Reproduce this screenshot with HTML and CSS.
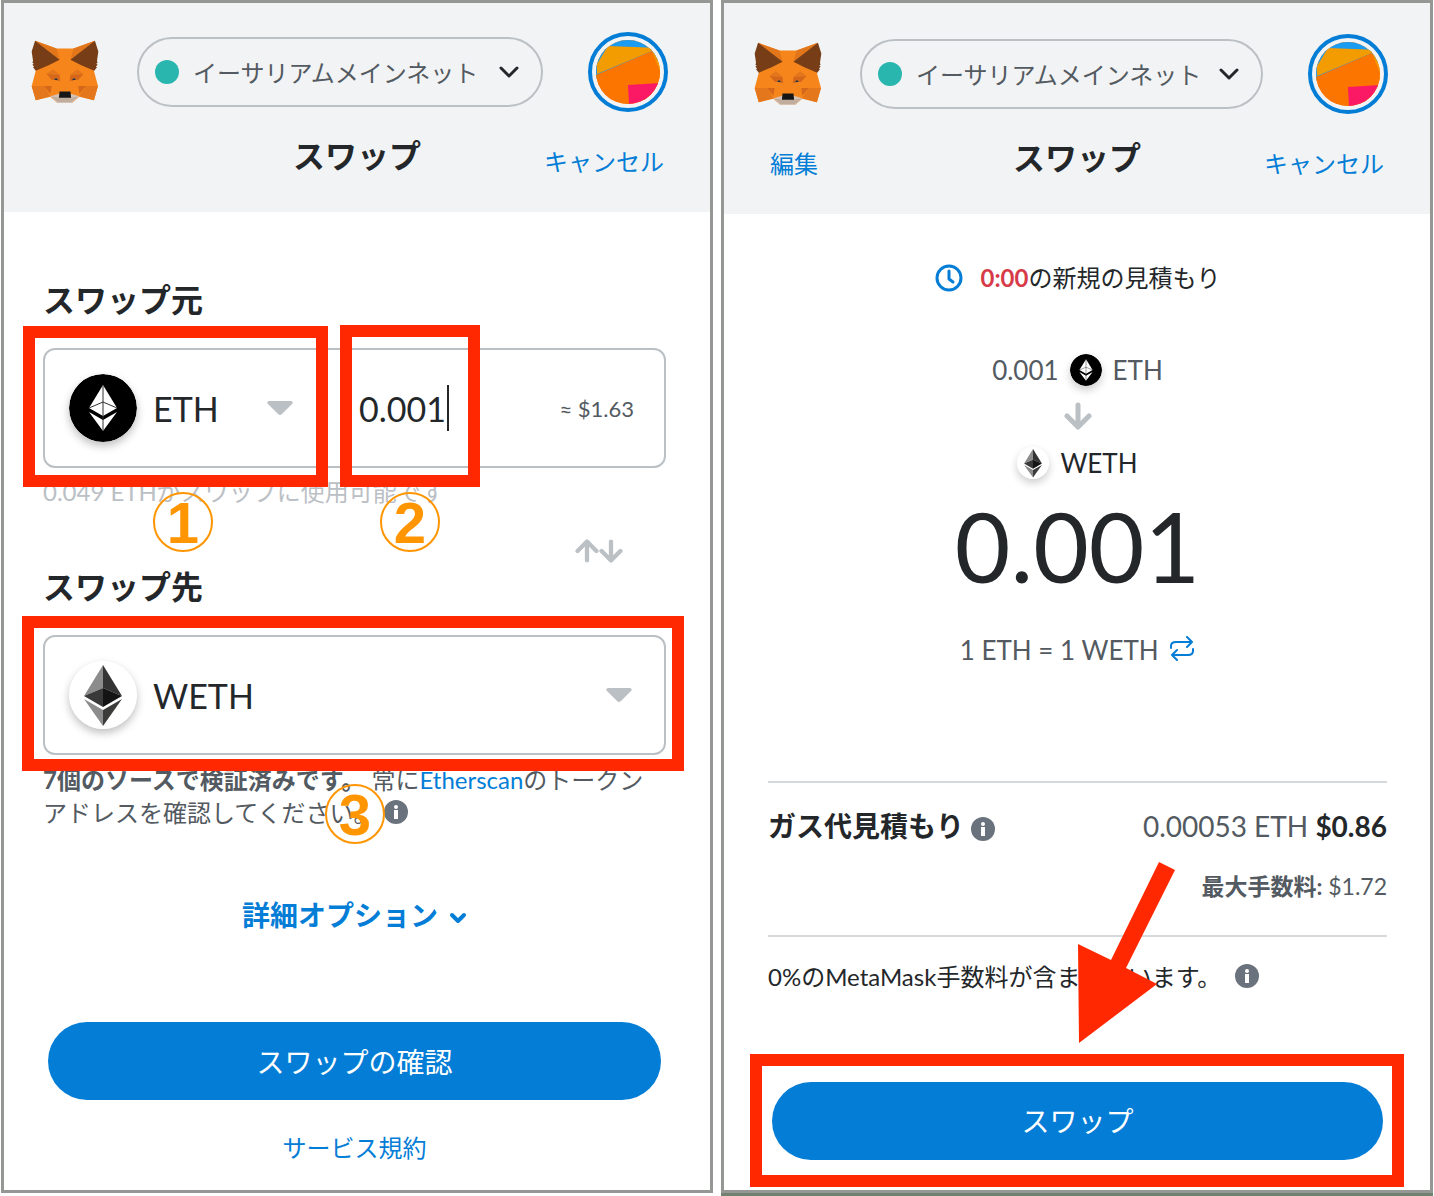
FILE: index.html
```html
<!DOCTYPE html>
<html lang="ja">
<head>
    <meta charset="UTF-8">
    <meta name="viewport" content="width=device-width, initial-scale=1.0">
    <title>MetaMask スワップ</title>
    <link rel="stylesheet" href="styles.css">
</head>
<body>
    <!-- Shared drawings -->
    <svg class="defs" aria-hidden="true">
        <symbol id="fox" viewBox="20 18 200 188">
            <path fill="#f6851b" d="M32 20 95 43H145L208 20 205 108 217 153 205 195 162 185 140 203H98L77 185 34 195 22 153 34 108Z"/>
            <path fill="#e2761b" d="M32 20 95 43 104 76ZM208 20 145 43 136 76Z"/>
            <path fill="#763d16" d="M32 20 104 76 72 92 34 108 26 98 29 96 24 91 28 88 24 84 26 80 22 52ZM208 20 136 76 168 92 206 108 214 98 211 96 216 91 212 88 216 84 214 80 218 52Z"/>
            <path fill="#e4761b" d="M66 118 84 104 104 119ZM174 118 156 104 136 119ZM22 153H58L77 183 34 195ZM217 153H182L162 183 205 195Z"/>
            <path fill="#d5671b" d="M66 118 104 120 106 140 92 130 82 136ZM174 118 136 120 134 140 148 130 158 136ZM58 153H81L77 176ZM182 153H159L162 176Z"/>
            <path fill="#233447" d="M86 134 94 130 101 137ZM154 134 146 130 139 137Z"/>
            <path fill="#d7c1b3" d="M77 183 103 176H137L162 183 140 203H98Z"/>
            <path fill="#c0ad9e" d="M80 184 103 188H137L159 184 140 200H98Z"/>
            <path fill="#161616" d="M104 169H136L138 188H102Z"/>
        </symbol>
        <symbol id="avatar" viewBox="0 0 64 64">
            <clipPath id="avatar-clip"><circle cx="32" cy="32" r="32"/></clipPath>
            <g clip-path="url(#avatar-clip)">
                <path fill="#fc7500" d="M0 0H64V64H0Z"/>
                <path fill="#1a9cf2" d="M0 0H64V20L0 40Z"/>
                <path fill="#f29c02" d="M12 6 64 8V40L56 11 1 34V24Z"/>
                <path fill="#fc7500" d="M0 35 56 11 64 31V64H0Z"/>
                <path fill="#fb1865" d="M32 45 64 43V64H33Z"/>
            </g>
        </symbol>
        <symbol id="chevron" viewBox="0 0 20 12">
            <path fill="none" stroke="currentColor" stroke-width="3" stroke-linecap="round" stroke-linejoin="round" d="M2 2 10 10 18 2"/>
        </symbol>
        <symbol id="chevron-bold" viewBox="0 0 18 12">
            <path fill="none" stroke="currentColor" stroke-width="4" stroke-linecap="round" stroke-linejoin="round" d="M3 3 9 9 15 3"/>
        </symbol>
        <symbol id="caret-down" viewBox="0 0 26 15">
            <path fill="#bbc0c5" d="M2 0H24Q27 1 25 3L15 13Q13 15 11 13L1 3Q-1 1 2 0Z"/>
        </symbol>
        <symbol id="arrow-down" viewBox="0 0 28 28">
            <path fill="none" stroke="#bbc0c5" stroke-width="5" stroke-linecap="round" stroke-linejoin="round" d="M14 3V24M3 14 14 25 25 14"/>
        </symbol>
        <symbol id="eth" viewBox="0 0 68 68">
            <circle cx="34" cy="34" r="34"/>
            <path fill="#fff" d="M34 11 48 34 34 42 20 34Z"/>
            <path fill="#fff" d="M20 38 34 46 48 38 34 57Z"/>
            <path fill="none" stroke="#333" d="M34 11V57M20 34 34 28 48 34"/>
        </symbol>
        <symbol id="weth" viewBox="0 0 68 68">
            <circle cx="34" cy="34" r="34" fill="#fff"/>
            <path fill="#8c8c8c" d="M34 4V27L15 35ZM15 38 34 49V65Z"/>
            <path fill="#343434" d="M34 4V27L53 35Z"/>
            <path fill="#393939" d="M34 27V46L15 35Z"/>
            <path fill="#141414" d="M34 27V46L53 35Z"/>
            <path fill="#3c3c3b" d="M53 38 34 49V65Z"/>
        </symbol>
        <symbol id="info" viewBox="0 0 24 24">
            <circle cx="12" cy="12" r="12" fill="#6a737d"/>
            <path fill="#fff" d="M10 10H14V19H10Z"/>
            <circle cx="12" cy="7" r="2" fill="#fff"/>
        </symbol>
    </svg>

    <main class="page">
        <!-- Enter the swap -->
        <section class="screen">
            <header class="header">
                <div class="header-top">
                    <svg class="fox"><use href="#fox"/></svg>
                    <div class="network">
                        <span class="dot"></span>
                        <select aria-label="ネットワーク">
                            <option>イーサリアムメインネット</option>
                        </select>
                        <svg class="chevron"><use href="#chevron"/></svg>
                    </div>
                    <button class="account" type="button" aria-label="アカウント"><svg><use href="#avatar"/></svg></button>
                </div>
                <div class="header-title">
                    <span></span>
                    <h1>スワップ</h1>
                    <a href="#">キャンセル</a>
                </div>
            </header>

            <form class="swap-form">
                <label class="label" for="from">スワップ元</label>
                <div class="field">
                    <div class="token token-from">
                        <svg class="token-icon"><use href="#eth"/></svg>
                        <select id="from"><option>ETH</option></select>
                        <svg class="caret-down"><use href="#caret-down"/></svg>
                        <span class="mark mark-token"></span>
                        <span class="step step-1">1</span>
                    </div>
                    <div class="amount">
                        <input type="text" value="0.001" aria-label="数量">
                        <span class="cursor"></span>
                        <span class="mark mark-amount"></span>
                        <span class="step step-2">2</span>
                    </div>
                    <span class="fiat">≈ $1.63</span>
                </div>
                <p class="hint">0.049 ETHがスワップに使用可能です</p>

                <button class="switch" type="button" aria-label="入れ替え">
                    <svg class="up"><use href="#arrow-down"/></svg>
                    <svg><use href="#arrow-down"/></svg>
                </button>

                <label class="label" for="to">スワップ先</label>
                <div class="field">
                    <div class="token token-to">
                        <svg class="token-icon"><use href="#weth"/></svg>
                        <select id="to"><option>WETH</option></select>
                        <svg class="caret-down"><use href="#caret-down"/></svg>
                    </div>
                    <span class="mark mark-to"></span>
                    <span class="step step-3">3</span>
                </div>
                <p class="verified"><b>7個のソースで検証済みです。</b> 常に<a href="#">Etherscan</a>のトークンアドレスを確認してください。 <svg class="info"><use href="#info"/></svg></p>

                <button class="options" type="button">詳細オプション <svg><use href="#chevron-bold"/></svg></button>
                <button class="primary" type="button">スワップの確認</button>
                <a class="terms" href="#">サービス規約</a>
            </form>
        </section>

        <!-- Confirm the quote -->
        <section class="screen screen-quote">
            <header class="header">
                <div class="header-top">
                    <svg class="fox"><use href="#fox"/></svg>
                    <div class="network">
                        <span class="dot"></span>
                        <select aria-label="ネットワーク">
                            <option>イーサリアムメインネット</option>
                        </select>
                        <svg class="chevron"><use href="#chevron"/></svg>
                    </div>
                    <button class="account" type="button" aria-label="アカウント"><svg><use href="#avatar"/></svg></button>
                </div>
                <div class="header-title">
                    <a href="#">編集</a>
                    <h1>スワップ</h1>
                    <a href="#">キャンセル</a>
                </div>
            </header>

            <div class="quote">
                <p class="timer">
                    <svg viewBox="0 0 28 28" fill="none" stroke="#037dd6" stroke-linecap="round" stroke-linejoin="round">
                        <circle cx="14" cy="14" r="12" stroke-width="3"/>
                        <path stroke-width="3" d="M14 7V15L18 18"/>
                    </svg>
                    <span><b>0:00</b>の新規の見積もり</span>
                </p>
                <p class="source">0.001 <svg><use href="#eth"/></svg> ETH</p>
                <svg class="arrow"><use href="#arrow-down"/></svg>
                <p class="target"><svg><use href="#weth"/></svg> WETH</p>
                <p class="total">0.001</p>
                <p class="rate">1 ETH = 1 WETH
                    <svg viewBox="0 0 26 26" fill="none" stroke="#037dd6" stroke-width="2" stroke-linecap="round" stroke-linejoin="round">
                        <path d="M2 12V10Q2 6 7 6H23M18 1 23 6 18 11M24 13V15Q24 19 19 19H3M8 14 3 19 8 24"/>
                    </svg>
                </p>

                <div class="fees">
                    <div class="fee-row">
                        <b>ガス代見積もり <svg class="info"><use href="#info"/></svg></b>
                        <span class="gas">0.00053 ETH <b>$0.86</b></span>
                    </div>
                    <p class="max-fee"><b>最大手数料:</b> $1.72</p>
                </div>
                <p class="included">0%のMetaMask手数料が含まれています。 <svg class="info"><use href="#info"/></svg></p>

                <div class="submit">
                    <button class="primary" type="button">スワップ</button>
                    <span class="mark mark-submit"></span>
                    <svg class="pointer" viewBox="0 0 98 182"><path fill="#ff2800" d="M81 0 97 8 48 106 79 122 1 181 0 82 33 98Z"/></svg>
                </div>
            </div>
        </section>
    </main>
</body>
</html>
```

FILE: styles.css
```css
* {
    box-sizing: border-box;
}

body {
    margin: 0;
    background-color: #fff;
    color: #24272a;
    font-family: Lato, "Noto Sans CJK JP", sans-serif;
    font-size: 24px;
}

h1, p {
    margin: 0;
}

a {
    color: #037dd6;
    text-decoration: none;
}

button, select, input {
    border: none;
    padding: 0;
    background: none;
    color: inherit;
    font: inherit;
}

select {
    appearance: none;
}

button {
    cursor: pointer;
}

.defs {
    position: absolute;
    width: 0;
    height: 0;
}

.page {
    display: grid;
    grid-template-columns: 1fr 1fr;
    gap: 8px;
    min-height: 100vh;
    padding: 0 1px 3px;
}

.screen {
    border: 3px solid #959795;
    min-width: 0;
}

.screen-quote {
    box-shadow: 0 3px 0 #71816f;
}

/* Header */
.header {
    height: 209px;
    padding-top: 29px;
    background-color: #f2f3f4;
}

.screen-quote .header {
    height: 211px;
    padding-top: 31px;
}

.header-top {
    display: flex;
    align-items: center;
    padding: 0 42px 0 27px;
}

.screen-quote .header-top {
    padding-left: 30px;
}

.fox {
    width: 68px;
    height: 64px;
}

.network {
    flex: 1;
    display: flex;
    align-items: center;
    min-width: 0;
    height: 70px;
    margin: 0 45px 0 38px;
    padding: 0 22px 0 16px;
    border: 2px solid #bbc0c5;
    border-radius: 35px;
    color: #535a61;
}

.network select {
    flex: 1;
    min-width: 0;
    margin-left: 14px;
}

.dot {
    width: 24px;
    height: 24px;
    border-radius: 50%;
    background-color: #29b6af;
}

.chevron {
    width: 20px;
    height: 12px;
    color: #24272a;
}

.account {
    width: 80px;
    height: 80px;
    padding: 4px;
    border: 4px solid #037dd6;
    border-radius: 50%;
}

.account svg {
    display: block;
    width: 64px;
    height: 64px;
}

.header-title {
    display: grid;
    grid-template-columns: 1fr auto 1fr;
    align-items: end;
    padding: 22px 46px 0;
    line-height: 32px;
}

.header-title h1 {
    font-size: 32px;
    line-height: 44px;
}

.header-title a:last-child {
    text-align: right;
}

/* Swap form */
.swap-form {
    display: flex;
    flex-direction: column;
    padding: 68px 44px 20px 39px;
}

.label {
    font-size: 32px;
    font-weight: bold;
    line-height: 40px;
    margin-bottom: 28px;
}

.field {
    position: relative;
    display: flex;
    align-items: center;
    height: 120px;
    border: 2px solid #bbc0c5;
    border-radius: 12px;
}

.token {
    position: relative;
    display: flex;
    align-items: center;
    padding-left: 24px;
    font-size: 34px;
}

.token select {
    flex: 1;
    margin-left: 16px;
}

.token-from {
    width: 248px;
}

.token-to {
    flex: 1;
    padding-right: 32px;
}

.token-icon {
    width: 68px;
    height: 68px;
    border-radius: 50%;
    box-shadow: 0 4px 8px rgba(0, 0, 0, 0.25);
}

.caret-down {
    width: 26px;
    height: 15px;
}

.amount {
    position: relative;
    display: flex;
    align-items: center;
    margin-left: 66px;
    font-size: 34px;
}

.amount input {
    width: 88px;
}

.cursor {
    width: 2px;
    height: 46px;
    background-color: #24272a;
}

.fiat {
    margin-left: auto;
    padding-right: 30px;
    color: #535a61;
    font-size: 22px;
}

.hint {
    margin-top: 8px;
    color: #bbc0c5;
    line-height: 32px;
}

.switch {
    display: flex;
    align-self: flex-end;
    align-items: center;
    height: 32px;
    margin: 27px 43px 0 0;
}

.switch svg {
    width: 24px;
    height: 24px;
}

.switch .up {
    transform: rotate(180deg);
}

.verified {
    margin-top: 8px;
    color: #535a61;
    line-height: 33px;
}

.info {
    width: 24px;
    height: 24px;
    margin-left: 8px;
    vertical-align: -2px;
}

.verified .info {
    margin-left: 0;
}

.options {
    align-self: center;
    margin-top: 66px;
    color: #037dd6;
    font-size: 28px;
    font-weight: bold;
    line-height: 40px;
}

.options svg {
    width: 18px;
    height: 12px;
    margin-left: 4px;
    vertical-align: 2px;
}

.primary {
    height: 78px;
    border-radius: 39px;
    background-color: #037dd6;
    color: #fff;
    font-size: 28px;
}

.swap-form .primary {
    margin: 87px 5px 28px;
}

.terms {
    align-self: center;
    line-height: 40px;
}

/* Quote */
.quote {
    display: flex;
    flex-direction: column;
    align-items: center;
    padding: 44px 43px 20px 44px;
    font-size: 28px;
    line-height: 40px;
}

.timer {
    display: flex;
    align-items: center;
    gap: 18px;
    font-size: 24px;
}

.timer svg {
    width: 28px;
    height: 28px;
}

.timer b {
    color: #d73a49;
}

.source, .target {
    display: flex;
    align-items: center;
    gap: 11px;
    font-size: 26px;
}

.source {
    margin: 52px 0 12px;
    color: #535a61;
}

.source svg, .target svg {
    width: 32px;
    height: 32px;
    border-radius: 50%;
    box-shadow: 0 4px 8px rgba(0, 0, 0, 0.2);
}

.arrow {
    width: 28px;
    height: 28px;
    margin-bottom: 13px;
}

.total {
    margin: 13px 0 34px;
    font-size: 96px;
    line-height: 100px;
}

.rate {
    color: #535a61;
    font-size: 26px;
}

.rate svg {
    width: 26px;
    height: 26px;
    margin-left: 4px;
    vertical-align: -2px;
}

.fees {
    align-self: stretch;
    margin-top: 111px;
    padding: 23px 0 29px;
    border-top: 2px solid #d6d9dc;
    border-bottom: 2px solid #d6d9dc;
}

.fee-row {
    display: flex;
    justify-content: space-between;
}

.fee-row .info {
    margin-left: 0;
    vertical-align: -4px;
}

.gas {
    color: #535a61;
}

.gas b {
    color: #24272a;
}

.max-fee {
    margin-top: 20px;
    color: #535a61;
    font-size: 23px;
    text-align: right;
}

.included {
    align-self: stretch;
    margin: 20px 0 85px;
    font-size: 24px;
}

.submit {
    position: relative;
    align-self: stretch;
    display: flex;
    padding: 0 4px;
}

.submit .primary {
    flex: 1;
}

/* Guide marks drawn over the screens */
.mark {
    position: absolute;
    border: 12px solid #ff2800;
    pointer-events: none;
}

.mark-token {
    inset: -48px -35px -45px -22px;
}

.mark-amount {
    inset: -60px -31px -56px -19px;
}

.mark-to {
    inset: -21px -20px -18px -23px;
}

.mark-submit {
    inset: -28px -17px -27px -18px;
}

.step {
    position: absolute;
    width: 60px;
    height: 60px;
    border: 2px solid #ff9500;
    border-radius: 50%;
    color: #ff9500;
    font-family: "Liberation Sans", sans-serif;
    font-size: 58px;
    font-weight: bold;
    line-height: 58px;
    text-align: center;
}

.step-1 {
    top: 118px;
    left: 108px;
}

.step-2 {
    top: 107px;
    left: 21px;
}

.step-3 {
    top: 147px;
    left: 280px;
}

.pointer {
    position: absolute;
    bottom: 116px;
    left: 50%;
    width: 98px;
    height: 182px;
}
```
